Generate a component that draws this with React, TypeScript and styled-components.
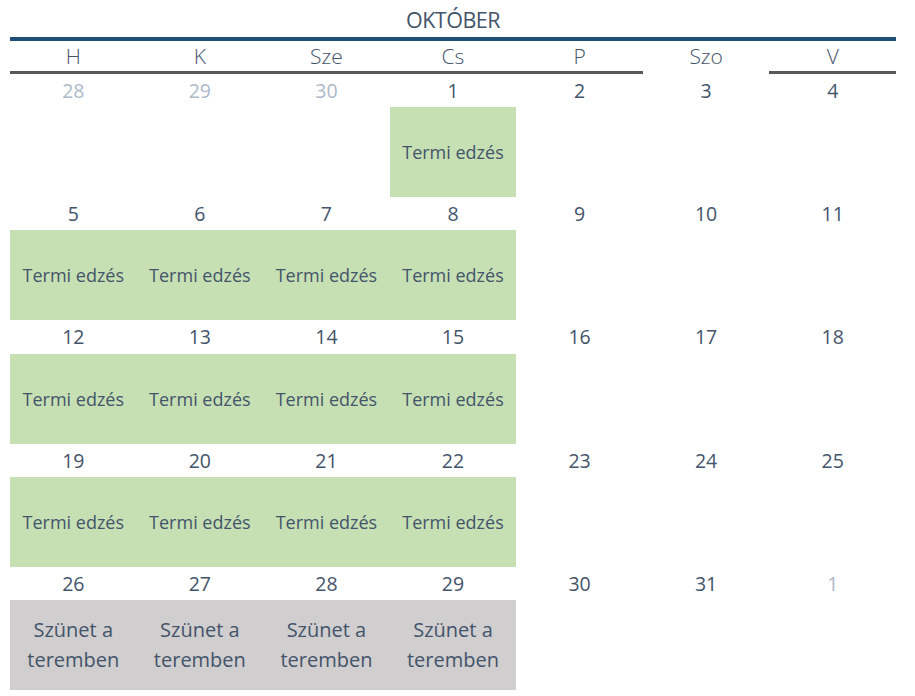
import React from 'react';
import styled, { createGlobalStyle } from 'styled-components';

const GlobalStyle = createGlobalStyle`
  html, body {
    margin: 0;
    padding: 0;
    background: #ffffff;
  }
  body {
    font-family: 'Open Sans', 'Lato', sans-serif;
    color: #44546a;
  }
`;

const Page = styled.div`
  width: 886px;
  padding: 0 0 0 10px;
`;

const Title = styled.div`
  height: 37px;
  display: flex;
  align-items: flex-end;
  justify-content: center;
  font-size: 21.5px;
  font-weight: 400;
  letter-spacing: -0.5px;
  line-height: 30px;
  padding-bottom: 2px;
  box-sizing: border-box;
`;

const BlueRule = styled.div`
  height: 4px;
  background: #1f4e79;
`;

const Grid = styled.div`
  display: grid;
  grid-template-columns: repeat(7, 1fr);
`;

const HeaderCell = styled.div<{ $ruled: boolean }>`
  height: 30px;
  display: flex;
  align-items: center;
  justify-content: center;
  font-size: 21px;
  font-weight: 300;
  border-bottom: 3px solid ${({ $ruled }) => ($ruled ? '#595959' : 'transparent')};
`;

const DayNumber = styled.div<{ $faded: boolean; $first?: boolean }>`
  height: ${({ $first }) => ($first ? '33px' : '33.3px')};
  display: flex;
  align-items: center;
  justify-content: center;
  font-size: 19.5px;
  color: ${({ $faded }) => ($faded ? '#adb9ca' : '#44546a')};
`;

const EventCell = styled.div<{ $kind?: 'gym' | 'break' }>`
  height: 90px;
  display: flex;
  align-items: center;
  justify-content: center;
  text-align: center;
  background: ${({ $kind }) =>
    $kind === 'gym' ? '#c6e0b4' : $kind === 'break' ? '#d0cece' : 'transparent'};
  font-size: ${({ $kind }) => ($kind === 'break' ? '20px' : '18px')};
  line-height: 30px;
  padding: 0 12px;
`;

type Day = { n: number; faded?: boolean; event?: 'gym' | 'break' };

const headers = ['H', 'K', 'Sze', 'Cs', 'P', 'Szo', 'V'];

const gymWeek = (start: number): Day[] =>
  Array.from({ length: 7 }, (_, i) => ({ n: start + i, event: i < 4 ? 'gym' : undefined }));

const weeks: Day[][] = [
  [
    { n: 28, faded: true },
    { n: 29, faded: true },
    { n: 30, faded: true },
    { n: 1, event: 'gym' },
    { n: 2 },
    { n: 3 },
    { n: 4 },
  ],
  gymWeek(5),
  gymWeek(12),
  gymWeek(19),
  [
    { n: 26, event: 'break' },
    { n: 27, event: 'break' },
    { n: 28, event: 'break' },
    { n: 29, event: 'break' },
    { n: 30 },
    { n: 31 },
    { n: 1, faded: true },
  ],
];

const labels = {
  gym: 'Termi edzés',
  break: 'Szünet a teremben',
};

const App = () => {
  return (
    <Page>
      <GlobalStyle />
      <Title>OKTÓBER</Title>
      <BlueRule />
      <Grid>
        {headers.map((h) => (
          <HeaderCell key={h} $ruled={h !== 'Szo'}>
            {h}
          </HeaderCell>
        ))}
      </Grid>
      {weeks.map((week, w) => (
        <Grid key={w}>
          {week.map((d, i) => (
            <DayNumber key={'n' + i} $faded={!!d.faded} $first={w === 0}>
              {d.n}
            </DayNumber>
          ))}
          {week.map((d, i) => (
            <EventCell key={'e' + i} $kind={d.event}>
              {d.event ? labels[d.event] : null}
            </EventCell>
          ))}
        </Grid>
      ))}
    </Page>
  );
};

export default App;
